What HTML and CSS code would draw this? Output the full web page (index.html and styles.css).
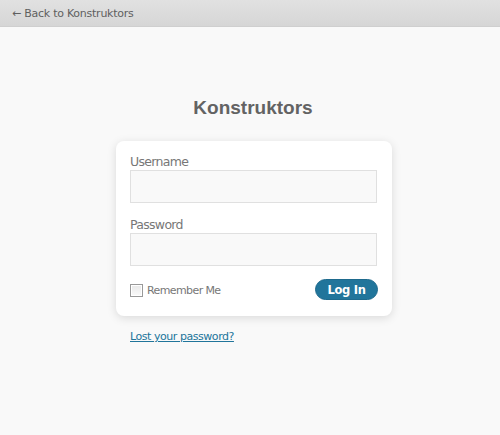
FILE: index.html
```html
<!DOCTYPE html>
<html>
<head>
<meta charset="utf-8">
<link rel="stylesheet" href="styles.css">
</head>
<body>
<div class="topbar"><a class="back" href="#">&larr; Back to Konstruktors</a></div>
<main class="login">
  <h1 class="title">Konstruktors</h1>
  <form class="card">
    <label class="field">
      <span class="label">Username</span>
      <input class="input" type="text">
    </label>
    <label class="field field-pw">
      <span class="label">Password</span>
      <input class="input" type="password">
    </label>
    <div class="actions">
      <label class="remember"><span class="check"></span>Remember Me</label>
      <button class="btn" type="button">Log In</button>
    </div>
  </form>
  <p class="nav"><a href="#">Lost your password?</a></p>
</main>
</body>
</html>
```
FILE: styles.css
```css
html, body {
  margin: 0;
  padding: 0;
}
body {
  background: #f9f9f9;
  font-family: "DejaVu Sans", Verdana, sans-serif;
  width: 500px;
  height: 435px;
  overflow: hidden;
}
.topbar {
  height: 27px;
  background: linear-gradient(#e1e1e1, #d6d6d6);
  border-bottom: 1px solid #cfcfcf;
  box-sizing: border-box;
  padding-left: 12px;
  display: flex;
  align-items: center;
}
.back {
  color: #5f5f5f;
  font-size: 11px;
  text-decoration: none;
  letter-spacing: -0.25px;
}
.login {
  width: 276px;
  margin: 0 auto 0 116px;
  padding-top: 69px;
}
.title {
  margin: 0 0 21px;
  text-align: center;
  font-family: "Liberation Sans", Arial, sans-serif;
  font-weight: bold;
  font-size: 19px;
  line-height: 24px;
  color: #636363;
  padding-right: 2px;
}
.card {
  background: #fff;
  border-radius: 8px;
  box-shadow: 0 2px 10px rgba(0,0,0,0.13);
  padding: 13px 15px 16px 14px;
  height: 175px;
  box-sizing: border-box;
}
.field {
  display: block;
}
.field-pw {
  margin-top: 14px;
}
.label {
  display: block;
  font-size: 12.5px;
  letter-spacing: -0.7px;
  color: #777;
  line-height: 15px;
  margin-bottom: 1px;
}
.input {
  display: block;
  width: 247px;
  height: 33px;
  box-sizing: border-box;
  border: 1px solid #e0e0e0;
  background: #f9f9f9;
  margin: 0;
  padding: 0;
}
.actions {
  margin-top: 13px;
  display: flex;
  align-items: center;
  justify-content: space-between;
  height: 21px;
}
.remember {
  display: flex;
  align-items: center;
  font-size: 11px;
  letter-spacing: -0.6px;
  color: #777;
  padding-top: 2px;
}
.check {
  width: 11px;
  height: 11px;
  border: 1px solid #999;
  background: linear-gradient(#e8e8e8, #fafafa);
  margin-right: 4px;
  box-shadow: inset 0 0 0 1px #fff;
}
.btn {
  width: 63px;
  height: 21px;
  border: 1px solid #1e6a8d;
  border-radius: 11px;
  background: #21759b;
  color: #fff;
  font-family: "DejaVu Sans", Verdana, sans-serif;
  font-weight: bold;
  font-size: 11.5px;
  letter-spacing: -0.3px;
  padding: 0;
  margin-right: -1px;
}
.nav {
  margin: 14px 0 0 14px;
  font-size: 11px;
  letter-spacing: -0.45px;
}
.nav a {
  color: #21759b;
  text-decoration: underline;
}
```
